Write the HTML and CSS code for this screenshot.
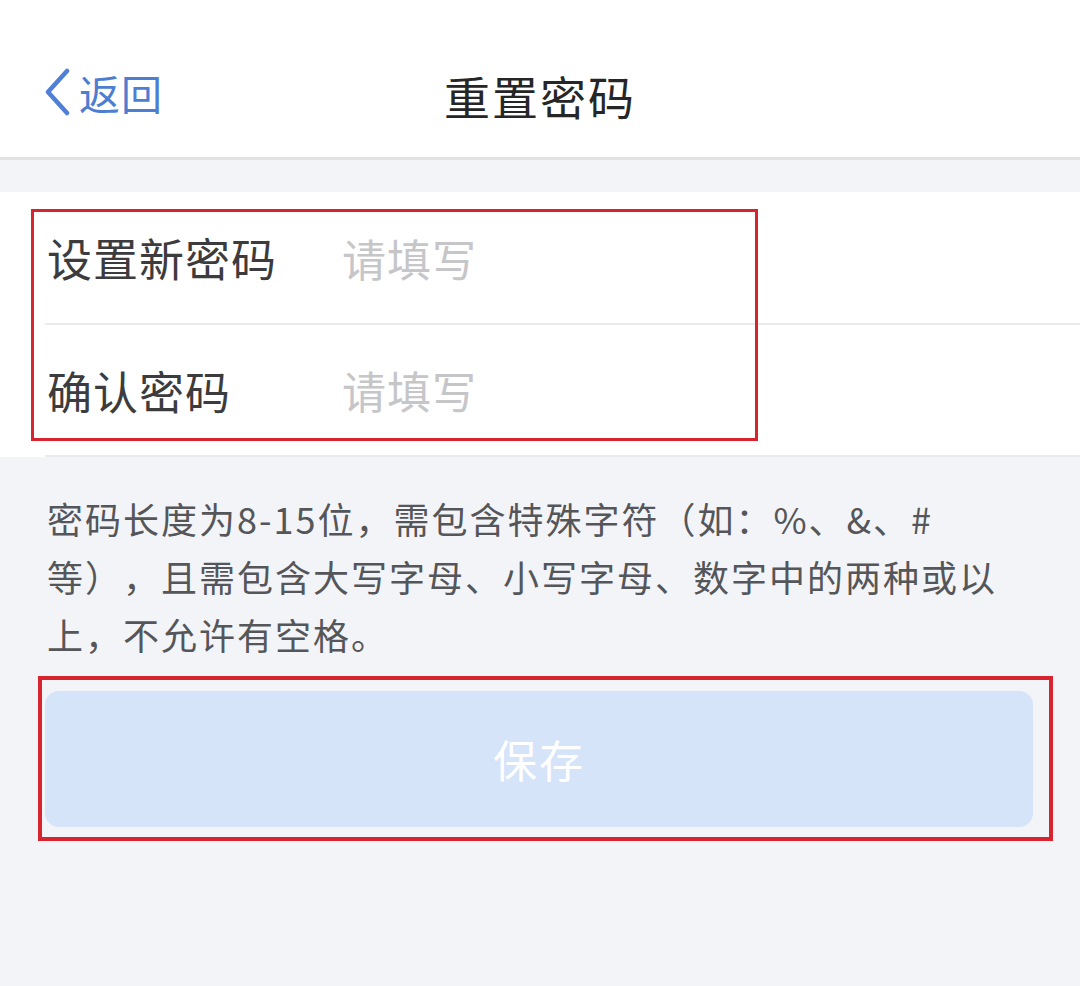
FILE: index.html
```html
<!DOCTYPE html>
<html lang="zh-CN">
<head>
<meta charset="utf-8">
<title>重置密码</title>
<link rel="stylesheet" href="styles.css">
</head>
<body>
<div class="page">
  <header class="nav">
    <div class="nav-left">
      <a class="back" href="#">
        <svg class="chev" width="28" height="48" viewBox="0 0 28 48"><path d="M24 3 L5 24 L24 45" fill="none" stroke="#4f80d6" stroke-width="4.5" stroke-linecap="round" stroke-linejoin="round"/></svg>
        <span class="back-text">返回</span>
      </a>
    </div>
    <h1 class="nav-title">重置密码</h1>
    <div class="nav-right"></div>
  </header>
  <div class="gap"></div>
  <section class="form">
    <div class="row">
      <label class="label">设置新密码</label>
      <span class="placeholder">请填写</span>
    </div>
    <div class="row">
      <label class="label">确认密码</label>
      <span class="placeholder">请填写</span>
    </div>
  </section>
  <p class="hint">密码长度为8-15位，需包含特殊字符（如：%、&amp;、#等），且需包含大写字母、小写字母、数字中的两种或以上，不允许有空格。</p>
  <div class="btn-wrap">
    <button class="save">保存</button>
  </div>
  <div class="mark mark-form"></div>
  <div class="mark mark-btn"></div>
</div>
</body>
</html>
```
FILE: styles.css
```css
* { box-sizing: border-box; }
html, body { margin: 0; padding: 0; }
body {
  width: 1080px;
  height: 986px;
  background: #f3f4f8;
  font-family: "Noto Sans CJK SC", "Noto Sans", sans-serif;
  overflow: hidden;
}
.page { position: relative; width: 1080px; height: 986px; }
.nav {
  height: 160px;
  background: #fff;
  border-bottom: 3px solid #e2e3e7;
  display: grid;
  grid-template-columns: 1fr auto 1fr;
  align-items: center;
  padding-top: 32px;
}
.nav-left { padding-left: 43px; }
.back {
  display: inline-flex;
  align-items: center;
  gap: 8px;
  text-decoration: none;
  color: #4d7ed2;
}
.chev { display: block; }
.back-text { font-size: 41px; line-height: 1; letter-spacing: 1px; }
.nav-title {
  margin: 0;
  font-size: 46px;
  font-weight: 400;
  color: #262626;
  letter-spacing: 2px;
}
.gap { height: 32px; }
.form { background: #fff; }
.row {
  height: 132px;
  margin-left: 45px;
  display: flex;
  align-items: center;
  border-bottom: 2px solid #ebebee;
}
.row:first-child { height: 133px; }
.label {
  width: 297px;
  font-size: 45px;
  color: #3c3c3e;
  letter-spacing: 1px;
  padding-left: 2px;
}
.placeholder {
  font-size: 44px;
  color: #c6c6c9;
  letter-spacing: 1px;
}
.hint {
  margin: 0;
  padding: 32px 73px 0 47px;
  font-size: 36px;
  line-height: 58px;
  letter-spacing: 2px;
  color: #555659;
  text-spacing-trim: space-all;
}
.btn-wrap { padding: 28px 47px 0 45px; }
.save {
  display: block;
  width: 988px;
  height: 136px;
  border: 0;
  border-radius: 14px;
  background: #d5e4f8;
  color: #fff;
  font-family: inherit;
  font-size: 44px;
  letter-spacing: 2px;
}
.mark { position: absolute; border: 3px solid #d8242f; pointer-events: none; }
.mark-form { left: 31px; top: 209px; width: 727px; height: 232px; }
.mark-btn { left: 38px; top: 676px; width: 1015px; height: 165px; border-width: 4px; }
```
